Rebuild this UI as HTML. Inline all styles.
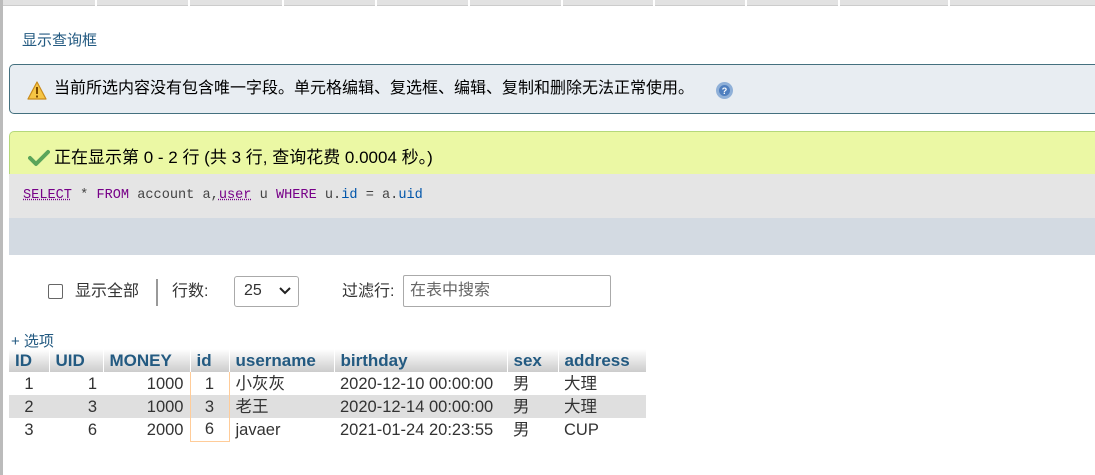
<!DOCTYPE html>
<html><head><meta charset="utf-8"><style>
*{margin:0;padding:0;box-sizing:border-box}
body{width:1095px;height:475px;overflow:hidden;background:#fff;font-family:"Liberation Sans","Noto Sans CJK SC",sans-serif;color:#333;position:relative}
.abs{position:absolute}
.lb{left:0;top:0;width:3px;height:475px;background:#bbb}
.tabs{left:3px;top:0;width:1092px;height:6px;background:#e2e2e2;border-bottom:1px solid #ccc}
.sep{top:0;width:2px;height:6px;background:#fff}
.title{left:22px;top:29px;font-size:15px;color:#235a81}
.warn{left:9px;top:64px;width:1100px;height:50px;background:#e8edf2;border:1px solid #44707f;border-radius:5px;font-size:16px;line-height:20px;color:#000;padding:14px 0 0 44px}
.green{left:9px;top:131px;width:1100px;height:44px;background:#ebf8a4;border:1px solid #b5d87a;border-bottom:none;border-radius:5px 0 0 0;font-size:17px;line-height:20px;color:#000;padding:16px 0 0 44px}
.sql{left:9px;top:174px;width:1100px;height:44px;background:#e5e5e5;font-family:"Liberation Mono",monospace;font-size:13.6px;padding:14px 0 0 14px;color:#444}
.kw{color:#708;text-decoration:underline dotted}
.k2{color:#708}
.bl{color:#05a}
.bar{left:9px;top:218px;width:1100px;height:37px;background:#d3dae2}
table{position:absolute;left:9px;top:349px;border-collapse:collapse;font-size:16.5px;line-height:20px}
th{height:23px;background:linear-gradient(#fff,#ccc);color:#235a81;font-weight:bold;font-size:17px;text-align:left;padding:0 6px;border-right:1px solid #fff;vertical-align:middle}
td{height:23px;padding:0 6px;vertical-align:middle;white-space:nowrap}
tr.g td{background:#dfdfdf}
.r{text-align:right}
.c{text-align:center}
.idc{border-left:1px solid #fc9;border-right:1px solid #fc9}
tr:last-child .idc{border-bottom:1px solid #fc9}
</style></head><body>
<div class="abs lb"></div>
<div class="abs tabs"></div>
<div class="abs sep" style="left:95px"></div><div class="abs sep" style="left:188px"></div><div class="abs sep" style="left:282px"></div><div class="abs sep" style="left:375px"></div><div class="abs sep" style="left:468px"></div><div class="abs sep" style="left:561px"></div><div class="abs sep" style="left:653px"></div><div class="abs sep" style="left:745px"></div><div class="abs sep" style="left:838px"></div><div class="abs sep" style="left:948px"></div>
<div class="abs title">显示查询框</div>
<div class="abs warn">当前所选内容没有包含唯一字段。单元格编辑、复选框、编辑、复制和删除无法正常使用。</div>
<svg class="abs" style="left:27px;top:81px" width="20" height="19" viewBox="0 0 20 19"><path d="M10 1 L19 18 L1 18 Z" fill="#f6c544" stroke="#c98b1a" stroke-width="1.2" stroke-linejoin="round"/><rect x="9" y="6" width="2" height="7" fill="#7a4a00"/><rect x="9" y="14.5" width="2" height="2" fill="#7a4a00"/></svg>
<svg class="abs" style="left:715px;top:81px" width="19" height="19"><circle cx="9.5" cy="9.5" r="8.5" fill="#8fb0d8"/><circle cx="9.5" cy="9.5" r="5.5" fill="#4f7fbf"/><text x="9.5" y="13" font-size="9" fill="#fff" text-anchor="middle" font-family="Liberation Sans" font-weight="bold">?</text></svg>
<div class="abs green">正在显示第 0 - 2 行 (共 3 行, 查询花费 0.0004 秒。)</div>
<svg class="abs" style="left:28px;top:149px" width="22" height="18"><path d="M2 9 L8 15 L20 3" fill="none" stroke="#5aa55a" stroke-width="4" stroke-linejoin="round" stroke-linecap="round"/></svg>
<div class="abs sql"><span class="kw">SELECT</span> * <span class="k2">FROM</span> account a,<span class="kw">user</span> u <span class="k2">WHERE</span> u.<span class="bl">id</span> = a.<span class="bl">uid</span></div>
<div class="abs bar"></div>
<div class="abs" style="left:48px;top:284px;width:15px;height:15px;border:1px solid #666;border-radius:2px"></div>
<div class="abs" style="left:75px;top:282px;font-size:16px;line-height:20px">显示全部</div>
<div class="abs" style="left:156px;top:279px;width:2px;height:27px;background:#999"></div>
<div class="abs" style="left:172px;top:282px;font-size:16px;line-height:20px">行数:</div>
<div class="abs" style="left:234px;top:276px;width:65px;height:31px;border:1px solid #aaa;border-radius:3px;font-size:16px;padding:5px 0 0 9px">25</div>
<svg class="abs" style="left:279px;top:287px" width="12" height="8"><path d="M1 1 L6 6 L11 1" fill="none" stroke="#222" stroke-width="2"/></svg>
<div class="abs" style="left:342px;top:282px;font-size:16px;line-height:20px">过滤行:</div>
<div class="abs" style="left:403px;top:275px;width:208px;height:32px;border:1px solid #aaa;border-radius:2px;font-size:16px;line-height:20px;color:#666;padding:5px 0 0 6px">在表中搜索</div>
<div class="abs" style="left:11px;top:330px;font-size:15px;color:#235a81">+ 选项</div>
<table>
<tr><th style="width:40px">ID</th><th style="width:54px">UID</th><th style="width:87px">MONEY</th><th style="width:39px">id</th><th style="width:105px">username</th><th style="width:173px">birthday</th><th style="width:51px">sex</th><th style="width:88px">address</th></tr>
<tr><td class="c">1</td><td class="r">1</td><td class="r">1000</td><td class="c idc">1</td><td>小灰灰</td><td>2020-12-10 00:00:00</td><td>男</td><td>大理</td></tr>
<tr class="g"><td class="c">2</td><td class="r">3</td><td class="r">1000</td><td class="c idc">3</td><td>老王</td><td>2020-12-14 00:00:00</td><td>男</td><td>大理</td></tr>
<tr><td class="c">3</td><td class="r">6</td><td class="r">2000</td><td class="c idc">6</td><td>javaer</td><td>2021-01-24 20:23:55</td><td>男</td><td>CUP</td></tr>
</table>
</body></html>
